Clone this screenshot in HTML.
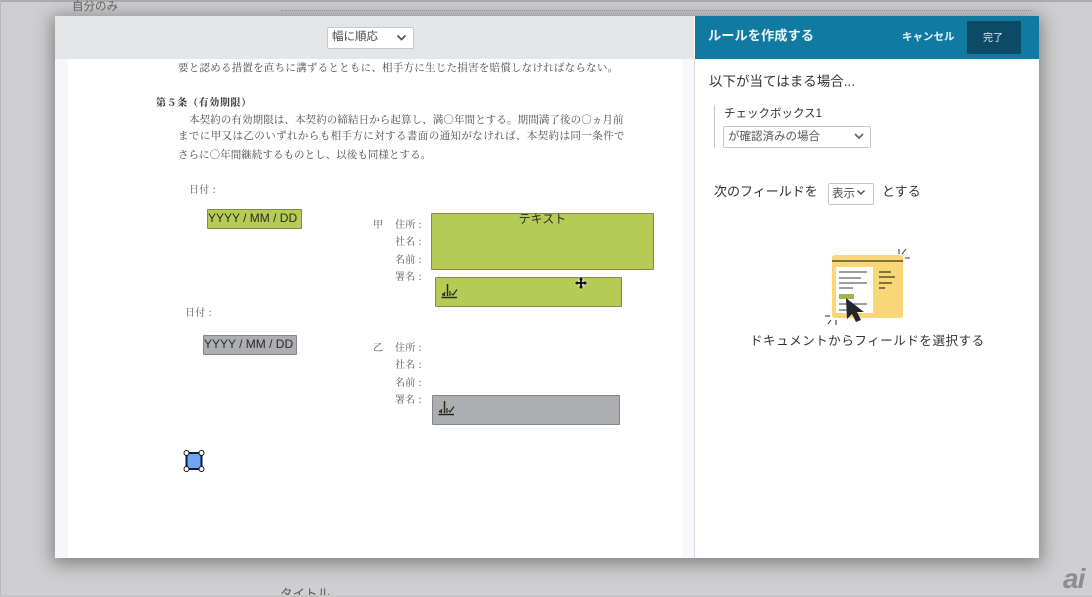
<!DOCTYPE html>
<html lang="ja"><head><meta charset="utf-8"><style>
html,body{margin:0;padding:0;background:#cfced0}
body{width:1092px;height:597px;overflow:hidden;position:relative;font-family:"Liberation Sans","Noto Sans CJK JP",sans-serif;color:#333}
div{position:absolute;white-space:nowrap}
#w{left:0;top:0;width:1092px;height:597px;overflow:hidden;background:#cfced0;filter:blur(.35px)}
.doc{font-family:"Noto Serif CJK SC","Liberation Serif",serif;color:#4a4a4a;font-size:10.5px;line-height:14px}
.lb{font-size:10px;letter-spacing:.3px;color:#555}
.gr{background:#b6cb55;border:1px solid #7f8f45;box-sizing:border-box;border-radius:1px}
.gy{background:#adaeb2;border:1px solid #85868a;box-sizing:border-box;border-radius:1px}
.sel{background:#fff;border:1px solid #c5c7cb;box-sizing:border-box;border-radius:2px}
.date{font-size:12px;color:#2a2c22;line-height:17px;text-align:left}
</style></head><body><div id="w">
<div style="left:0;top:0;width:1092px;height:2px;background:#a9abae"></div>
<div style="left:0;top:0;width:1px;height:597px;background:#b4b7be"></div>
<div style="left:72px;top:0;font-size:11.5px;line-height:14px;color:#666">自分のみ</div>
<div style="left:281px;top:10px;width:750px;height:2px;border-top:1px dotted #9b9b9b"></div>
<div style="left:280px;top:586px;font-size:12.500px;line-height:16px;color:#555">タイトル</div>
<div style="left:0;top:595px;width:1092px;height:2px;background:#c6c5c7"></div>

<div style="left:55px;top:16px;width:984px;height:542px;background:#fff;box-shadow:0 3px 16px 3px rgba(60,60,60,.5)"></div>
<div style="left:55px;top:16px;width:639px;height:43px;background:#e4e5e7"></div>
<div style="left:55px;top:59px;width:13px;height:499px;background:#f6f6fb"></div>
<div style="left:682px;top:59px;width:12px;height:499px;background:#f8f8fc"></div>
<div style="left:694px;top:59px;width:1px;height:499px;background:#d5d8e0"></div>
<div style="left:695px;top:16px;width:344px;height:43px;background:#117aa1"></div>

<div class="sel" style="left:327px;top:27px;width:87px;height:22px"></div>
<div style="left:332px;top:29px;font-size:11.500px;line-height:16px;color:#444">幅に順応</div>
<svg style="position:absolute;left:396px;top:33px" width="11" height="9"><path d="M1.500 2.500L5.500 6.500L9.500 2.500" fill="none" stroke="#555" stroke-width="1.800"/></svg>

<div style="left:708px;top:27px;font-size:13.250px;line-height:18px;font-weight:bold;color:#eaf3f7">ルールを作成する</div>
<div style="left:902px;top:30px;font-size:10.500px;line-height:14px;font-weight:bold;color:#eef5f8">キャンセル</div>
<div style="left:967px;top:21px;width:54px;height:33px;background:#0c4a66;border-radius:1px"></div>
<div style="left:983px;top:32px;font-size:10px;line-height:14px;color:#e8eff3">完了</div>

<div class="doc" style="left:178px;top:61px;letter-spacing:.24px">要と認める措置を直ちに講ずるとともに、相手方に生じた損害を賠償しなければならない。</div>
<div class="doc" style="left:156px;top:95px;font-weight:bold;font-size:10px;color:#333;letter-spacing:.65px">第５条（有効期限）</div>
<div class="doc" style="left:189px;top:113px;letter-spacing:.1px">本契約の有効期限は、本契約の締結日から起算し、満○年間とする。期間満了後の○ヵ月前</div>
<div class="doc" style="left:178px;top:129px;letter-spacing:.4px">までに甲又は乙のいずれからも相手方に対する書面の通知がなければ、本契約は同一条件で</div>
<div class="doc" style="left:178px;top:148px;letter-spacing:.05px">さらに○年間継続するものとし、以後も同様とする。</div>

<div class="doc lb" style="left:189px;top:182px">日付 :</div>
<div class="gr date" style="left:207px;top:209px;width:95px;height:20px">YYYY / MM / DD</div>
<div class="doc lb" style="left:373px;top:217px">甲</div>
<div class="doc lb" style="left:395px;top:217px">住所 :</div>
<div class="doc lb" style="left:395px;top:234px">社名 :</div>
<div class="doc lb" style="left:395px;top:252px">名前 :</div>
<div class="doc lb" style="left:395px;top:269px">署名 :</div>
<div class="gr" style="left:431px;top:213px;width:223px;height:57px;text-align:center;font-size:12px;line-height:11px;color:#2a2c22">テキスト</div>
<div class="gr" style="left:435px;top:277px;width:187px;height:30px"></div>
<svg style="position:absolute;left:441px;top:283px" width="17" height="17" fill="none" stroke="#26291c"><path stroke-width="1.500" d="M0.500 14.500H16M6.500 1V13"/><path stroke-width="1.200" d="M3.500 13V9M9 13V8M10.500 10.500L12 12L16 6.500"/><path stroke-width="2" d="M1 11.500H3"/></svg>

<svg style="position:absolute;left:574px;top:276px" width="14" height="14"><path d="M7 .5L9.800 3.800H8.200V5.800H10.200V4.200L13.500 7L10.200 9.800V8.200H8.200V10.200H9.800L7 13.500L4.200 10.200H5.800V8.200H3.800V9.800L.5 7L3.800 4.200V5.800H5.800V3.800H4.200Z" fill="#111" stroke="#fff" stroke-width=".5"/></svg>

<div class="doc lb" style="left:185px;top:305px">日付 :</div>
<div class="gy date" style="left:203px;top:335px;width:94px;height:20px">YYYY / MM / DD</div>
<div class="doc lb" style="left:373px;top:340px">乙</div>
<div class="doc lb" style="left:395px;top:340px">住所 :</div>
<div class="doc lb" style="left:395px;top:357px">社名 :</div>
<div class="doc lb" style="left:395px;top:375px">名前 :</div>
<div class="doc lb" style="left:395px;top:392px">署名 :</div>
<div class="gy" style="left:432px;top:395px;width:188px;height:30px"></div>
<svg style="position:absolute;left:438px;top:400px" width="17" height="17" fill="none" stroke="#26291c"><path stroke-width="1.500" d="M0.500 14.500H16M6.500 1V13"/><path stroke-width="1.200" d="M3.500 13V9M9 13V8M10.500 10.500L12 12L16 6.500"/><path stroke-width="2" d="M1 11.500H3"/></svg>

<svg style="position:absolute;left:182px;top:448px" width="25" height="25"><rect x="4.500" y="5" width="15" height="16" fill="#6ea6f5" stroke="#0e1a33" stroke-width="2" rx="1"/><g fill="#fff" stroke="#111" stroke-width="1"><circle cx="4.500" cy="5" r="2.500"/><circle cx="19.500" cy="5" r="2.500"/><circle cx="4.500" cy="21" r="2.500"/><circle cx="19.500" cy="21" r="2.500"/></g></svg>

<div style="left:709px;top:73px;font-size:13.500px;line-height:18px;color:#333">以下が当てはまる場合...</div>
<div style="left:714px;top:105px;width:1px;height:43px;background:#c6c7c9"></div>
<div style="left:724px;top:106px;font-size:11.500px;line-height:16px;color:#333">チェックボックス1</div>
<div class="sel" style="left:723px;top:126px;width:148px;height:22px"></div>
<div style="left:728px;top:129px;font-size:11.500px;line-height:16px;color:#555">が確認済みの場合</div>
<svg style="position:absolute;left:853px;top:132px" width="12" height="9"><path d="M2 2L6 6L10 2" fill="none" stroke="#666" stroke-width="1.800"/></svg>
<div style="left:714px;top:183px;font-size:13px;line-height:18px;color:#333">次のフィールドを</div>
<div class="sel" style="left:828px;top:183px;width:46px;height:22px"></div>
<div style="left:832px;top:186px;font-size:11.500px;line-height:16px;color:#555">表示</div>
<svg style="position:absolute;left:856px;top:189px" width="10" height="8"><path d="M1.500 1.500L5 5L8.500 1.500" fill="none" stroke="#555" stroke-width="1.500"/></svg>
<div style="left:882px;top:183px;font-size:13px;line-height:18px;color:#333">とする</div>

<svg style="position:absolute;left:820px;top:245px" width="95" height="85" fill="none">
<path d="M12 13Q12 10 16 10H80Q83 10 83 13V71Q83 73 80 73H16Q12 73 12 71Z" fill="#f9d776"/>
<path d="M12 16H83" stroke="#3a3520" stroke-width="1.300"/>
<rect x="16" y="22" width="37" height="46" fill="#fff"/>
<g stroke="#3b3b45" stroke-width="1"><path d="M19 27H47M19 33H41M19 38H47M19 43H33M19 59H47M19 65H27"/></g>
<rect x="19" y="49" width="15" height="5" fill="#9cb84c"/>
<g stroke="#3a3520" stroke-width="1.200"><path d="M59 27H71M59 32H75M59 38H72M59 43H65"/></g>
<path d="M26 53L27 74L32 69L36 77L41 75L37 67L44 67Z" fill="#24252e"/>
<g stroke="#333" stroke-width="1"><path d="M79 4V9M86 4L82 9M85 13H90M5 71H10M8 79L11 75M16 75V80"/></g>
</svg>
<div style="left:750px;top:332px;font-size:12.500px;line-height:18px;color:#333;letter-spacing:.55px">ドキュメントからフィールドを選択する</div>

<div style="left:1063px;top:565px;font-style:italic;font-weight:bold;font-size:28px;line-height:28px;color:#8d8d8f;letter-spacing:-1px;transform:scaleX(1);transform-origin:left">ai</div>
</div></body></html>
